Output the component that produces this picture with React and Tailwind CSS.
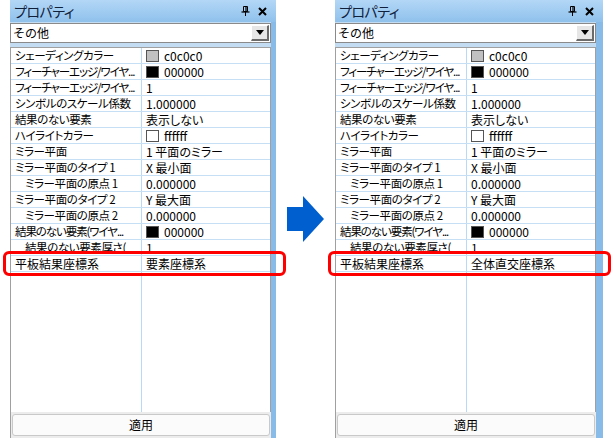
import React from "react";

const rows = [
  { label: "シェーディングカラー", swatch: "#c0c0c0", value: "c0c0c0" },
  { label: "フィーチャーエッジ/ワイヤ...", swatch: "#000000", value: "000000", tight: true },
  { label: "フィーチャーエッジ/ワイヤ...", value: "1", tight: true },
  { label: "シンボルのスケール係数", value: "1.000000" },
  { label: "結果のない要素", value: "表示しない" },
  { label: "ハイライトカラー", swatch: "#ffffff", value: "ffffff" },
  { label: "ミラー平面", value: "1 平面のミラー" },
  { label: "ミラー平面のタイプ 1", value: "X 最小面" },
  { label: "ミラー平面の原点 1", value: "0.000000", indent: true },
  { label: "ミラー平面のタイプ 2", value: "Y 最大面" },
  { label: "ミラー平面の原点 2", value: "0.000000", indent: true },
  { label: "結果のない要素(ワイヤ...", swatch: "#000000", value: "000000", tight: true },
  { label: "結果のない要素厚さ(", value: "1", indent: true },
];

const font = {
  fontFamily: '"Noto Sans CJK JP", "Liberation Sans", sans-serif',
};

const PinIcon = () => (
  <svg width="9" height="10" viewBox="0 0 9 10">
    <path d="M2.5 0.5h4v5h-4z" fill="none" stroke="#000" strokeWidth="1" />
    <path d="M5 1v4.5" stroke="#000" strokeWidth="1.2" />
    <path d="M0.5 6h8" stroke="#000" strokeWidth="1.2" />
    <path d="M4.5 6v4" stroke="#000" strokeWidth="1" />
  </svg>
);

const CloseIcon = () => (
  <svg width="9" height="9" viewBox="0 0 9 9">
    <path d="M1 1l7 7M8 1l-7 7" stroke="#000" strokeWidth="2" />
  </svg>
);

const Row = ({ row }) => (
  <div className="flex h-[16px] border-b border-[#c6dff4] text-black">
    <div
      className={`w-[131px] shrink-0 overflow-hidden whitespace-nowrap border-r border-[#b9d9f7] text-[11.5px] leading-[15px] [font-feature-settings:'palt'] ${
        row.indent ? "pl-[14px]" : "pl-[4px]"
      } ${row.tight ? "tracking-[-1.1px]" : "tracking-[-0.4px]"}`}
    >
      {row.label}
    </div>
    <div className="flex flex-1 items-center overflow-hidden whitespace-nowrap pl-[4px] text-[12px] leading-[15px] [font-feature-settings:'palt']">
      {row.swatch && (
        <span
          className="mr-[5px] inline-block h-[12px] w-[13px] border border-[#555]"
          style={{ backgroundColor: row.swatch }}
        />
      )}
      <span>{row.value}</span>
    </div>
  </div>
);

const Panel = ({ width, edge, coordValue }) => (
  <div className="flex h-full flex-col" style={{ width }}>
    <div className="flex h-[22px] shrink-0 items-center justify-between bg-gradient-to-b from-[#b3d7f6] to-[#8fc1ec] pl-[4px] pr-[9px]">
      <span className="text-[14px] tracking-[-0.5px] text-[#10203a] [font-feature-settings:'palt']">
        プロパティ
      </span>
      <div className="flex items-center gap-[8px]">
        <PinIcon />
        <CloseIcon />
      </div>
    </div>
    <div className="flex min-h-0 flex-1">
      <div className="flex min-w-0 flex-1 flex-col bg-[#c3dcf2]">
        <div className="mt-[1px] flex h-[20px] items-center border border-[#8a8a8a] bg-white">
          <span className="flex-1 pl-[2px] text-[12px] leading-none text-black">その他</span>
          <div className="mr-[1px] flex h-[16px] w-[18px] items-center justify-center border-b-2 border-l border-r-2 border-t border-b-[#6b6b6b] border-l-white border-r-[#6b6b6b] border-t-white bg-[#e6e6e6]">
            <svg width="8" height="5" viewBox="0 0 8 5">
              <path d="M0 0h8L4 5z" fill="#000" />
            </svg>
          </div>
        </div>
        <div className="mt-[4px] flex flex-1 flex-col border-l border-r border-t border-[#a0a0a0] bg-white">
          {rows.map((r, i) => (
            <Row key={i} row={r} />
          ))}
          <div className="relative flex h-[16px] border-b border-[#c6dff4] text-black">
            <div className="w-[131px] shrink-0 overflow-hidden whitespace-nowrap border-r border-[#b9d9f7] pl-[4px] text-[12px] leading-[15px]">
              平板結果座標系
            </div>
            <div className="flex-1 pl-[4px] text-[12px] leading-[15px]">{coordValue}</div>
            <div className="pointer-events-none absolute -bottom-[5px] -left-[8px] -right-[16px] -top-[5px] z-10 rounded-[6px] border-[3px] border-[#ff0000]" />
          </div>
          <div className="flex flex-1">
            <div className="w-[131px] shrink-0 border-r border-[#b9d9f7]" />
          </div>
        </div>
        <div className="flex h-[26px] shrink-0 items-center border-l border-[#a0a0a0] bg-[#ececec] px-[1px]">
          <button className="h-[22px] w-full rounded-[3px] border border-[#c9c9c9] bg-[#fbfbfb] text-[12px] text-black">
            適用
          </button>
        </div>
      </div>
      <div className="shrink-0 bg-[#88bbe8]" style={{ width: edge }} />
    </div>
  </div>
);

export default function App() {
  return (
    <div className="flex h-[438px] w-[613px] bg-white" style={font}>
      <div className="ml-[10px]">
        <Panel width={266} edge={5} coordValue="要素座標系" />
      </div>
      <div className="flex w-[59px] items-center justify-center">
        <svg width="37" height="46" viewBox="0 0 37 46">
          <path d="M0 11h16V0l21 23-21 23V35H0z" fill="#005fcf" />
        </svg>
      </div>
      <Panel width={268} edge={7} coordValue="全体直交座標系" />
    </div>
  );
}
